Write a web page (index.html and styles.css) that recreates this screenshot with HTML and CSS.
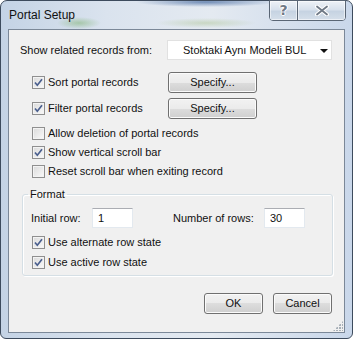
FILE: index.html
```html
<!DOCTYPE html>
<html lang="en">
<head>
  <meta charset="UTF-8" />
  <title>Portal Setup</title>
  <link rel="stylesheet" href="styles.css">
</head>
<body>
  <div class="window">
    <div class="titlebar">
      <span class="title">Portal Setup</span>
      <div class="caption-buttons">
        <div class="cap-btn help">?</div>
        <div class="cap-btn close">
          <svg width="14" height="11" viewBox="0 0 14 11">
            <path d="M2 1.5 L12 9.5 M12 1.5 L2 9.5" stroke="#fff" stroke-width="4" stroke-linecap="round"/>
            <path d="M2 1.5 L12 9.5 M12 1.5 L2 9.5" stroke="#6f7986" stroke-width="1.8" stroke-linecap="round"/>
          </svg>
        </div>
      </div>
    </div>

    <div class="client">
      <div class="source-row">
        <span class="source-label">Show related records from:</span>
        <div class="select">Stoktaki Aynı Modeli BUL<span class="arrow"></span></div>
      </div>

      <div class="options">
        <div class="tool-row">
          <label class="check-row"><span class="check"><svg width="11" height="11" viewBox="0 0 11 11"><path d="M2 5.5 L4.3 8.2 L9 2.3" stroke="#4a5f8e" stroke-width="1.7" fill="none"/></svg></span>Sort portal records</label>
          <button class="btn">Specify...</button>
        </div>
        <div class="tool-row">
          <label class="check-row"><span class="check"><svg width="11" height="11" viewBox="0 0 11 11"><path d="M2 5.5 L4.3 8.2 L9 2.3" stroke="#4a5f8e" stroke-width="1.7" fill="none"/></svg></span>Filter portal records</label>
          <button class="btn">Specify...</button>
        </div>
        <label class="check-row"><span class="check"></span>Allow deletion of portal records</label>
        <label class="check-row"><span class="check"><svg width="11" height="11" viewBox="0 0 11 11"><path d="M2 5.5 L4.3 8.2 L9 2.3" stroke="#4a5f8e" stroke-width="1.7" fill="none"/></svg></span>Show vertical scroll bar</label>
        <label class="check-row"><span class="check"></span>Reset scroll bar when exiting record</label>
      </div>

      <fieldset class="format">
        <legend>Format</legend>
        <div class="rows-line">
          <span class="initial-label">Initial row:</span>
          <input class="field" type="text" value="1" readonly>
          <span class="count-label">Number of rows:</span>
          <input class="field" type="text" value="30" readonly>
        </div>
        <div class="format-checks">
          <label class="check-row"><span class="check"><svg width="11" height="11" viewBox="0 0 11 11"><path d="M2 5.5 L4.3 8.2 L9 2.3" stroke="#4a5f8e" stroke-width="1.7" fill="none"/></svg></span>Use alternate row state</label>
          <label class="check-row"><span class="check"><svg width="11" height="11" viewBox="0 0 11 11"><path d="M2 5.5 L4.3 8.2 L9 2.3" stroke="#4a5f8e" stroke-width="1.7" fill="none"/></svg></span>Use active row state</label>
        </div>
      </fieldset>

      <div class="actions">
        <button class="btn action">OK</button>
        <button class="btn action">Cancel</button>
      </div>

      <span class="grip"></span>
    </div>
  </div>
</body>
</html>
```

FILE: styles.css
```css
body {
  margin: 0;
  background: #fff;
  font-family: "Liberation Sans", Arial, sans-serif;
  font-size: 11px;
  line-height: 15px;
  color: #111;
}

.window {
  width: 353px;
  height: 339px;
  box-sizing: border-box;
  border: 1px solid #3d4b5d;
  border-radius: 7px 7px 6px 6px;
  padding: 0 7px 5px;
  display: flex;
  flex-direction: column;
  background:
    radial-gradient(ellipse 22px 6px at 78px 22px, rgba(110,170,90,0.45), transparent),
    radial-gradient(ellipse 70px 5px at 205px 1px, rgba(50,90,150,0.65), transparent),
    radial-gradient(ellipse 50px 5px at 205px 22px, rgba(150,180,110,0.35), transparent),
    linear-gradient(to right, #c4d3e5, #dae3ee 30%, #e4eaf1 60%, #c9d7ea);
}

/* title bar */
.titlebar {
  height: 28px;
  display: flex;
  align-items: flex-start;
}

.title {
  padding: 7px 0 0 1px;
  font-size: 12px;
  color: #111;
}

.caption-buttons {
  margin: -1px -1px 0 auto;
  display: flex;
  border: 1px solid #5a6675;
  border-radius: 0 0 4px 4px;
  overflow: hidden;
}

.cap-btn {
  height: 19px;
  display: flex;
  align-items: center;
  justify-content: center;
  background: linear-gradient(#eef2f7, #d8e1ec 45%, #c6d3e2 55%, #d5dfea);
  box-shadow: inset 0 0 0 1px rgba(255,255,255,0.55);
}

.cap-btn.help {
  width: 27px;
  border-right: 1px solid #5a6675;
  font-family: "DejaVu Sans", sans-serif;
  font-weight: bold;
  font-size: 14px;
  color: #6f7986;
  text-shadow: 1px 0 0 #fff, -1px 0 0 #fff, 0 1px 0 #fff, 0 -1px 0 #fff;
}

.cap-btn.close {
  width: 47px;
}

/* client area */
.client {
  flex: 1;
  position: relative;
  background: #f0f0f0;
  border: 1px solid #7b8898;
}

.source-row {
  display: flex;
  align-items: center;
  margin: 10px 11px 0;
  height: 20px;
}

.source-label {
  width: 147px;
}

.select {
  width: 165px;
  height: 20px;
  box-sizing: border-box;
  border: 1px solid #e1e1e1;
  background: #fff;
  padding-left: 15px;
  display: flex;
  align-items: center;
}

.arrow {
  margin: 1px 3px 0 auto;
  width: 0;
  height: 0;
  border-left: 4px solid transparent;
  border-right: 4px solid transparent;
  border-top: 4px solid #111;
}

.options {
  margin: 12px 0 0 23px;
}

.tool-row {
  display: flex;
  align-items: center;
  height: 21px;
  margin-bottom: 5px;
}

.tool-row .check-row {
  width: 136px;
}

.tool-row + .check-row {
  margin-top: 1px;
}

.check-row {
  display: flex;
  align-items: center;
  height: 19px;
}

.check {
  width: 13px;
  height: 13px;
  box-sizing: border-box;
  border: 1px solid #8f8f8f;
  background: linear-gradient(135deg, #dadada, #fafafa);
  box-shadow: inset 0 0 0 1px #f3f3f3;
  margin-right: 3px;
  flex: none;
}

.check svg {
  display: block;
}

.btn {
  width: 89px;
  height: 21px;
  box-sizing: border-box;
  padding: 0;
  font: inherit;
  color: #111;
  border: 1px solid #707070;
  border-radius: 3px;
  background: linear-gradient(#f2f2f2, #ebebeb 50%, #dddddd 50%, #cfcfcf);
  box-shadow: inset 0 0 0 1px #fbfbfb;
}

/* format group */
.format {
  margin: 6px 11px 0 13px;
  padding: 0 0 3px;
  border: 1px solid #d5dfe5;
  border-radius: 3px;
  box-shadow: inset 1px 1px 0 #fff, 1px 1px 0 #fff;
}

.format legend {
  margin-left: 5px;
  padding: 0 2px;
}

.rows-line {
  display: flex;
  align-items: center;
  margin: 6px 0 0 8px;
  height: 20px;
}

.initial-label {
  width: 61px;
}

.count-label {
  width: 91px;
  margin-left: 40px;
}

.field {
  width: 41px;
  height: 20px;
  box-sizing: border-box;
  margin: 0;
  padding: 0 0 0 5px;
  font: inherit;
  color: #111;
  background: #fff;
  border: 1px solid #e3e9ef;
  border-top-color: #abadb3;
  outline: none;
}

.format-checks {
  margin: 4px 0 0 9px;
}

.format-checks .check-row {
  height: 20px;
}

.actions {
  display: flex;
  justify-content: flex-end;
  gap: 10px;
  margin: 17px 12px 0 0;
}

.btn.action {
  width: 59px;
}

.grip {
  position: absolute;
  right: 1px;
  bottom: 1px;
  width: 10px;
  height: 10px;
  background: radial-gradient(circle at 1px 1px, #a8b0b8 1px, transparent 1.2px) 0 0 / 3px 3px;
  clip-path: polygon(100% 0, 100% 100%, 0 100%);
}
```
